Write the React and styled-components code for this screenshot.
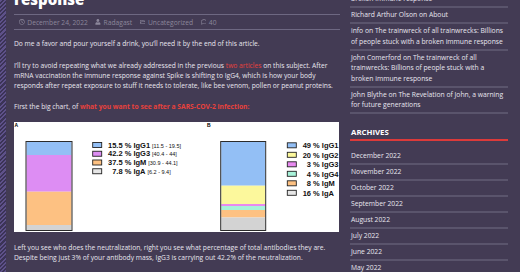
import React from 'react';
import styled, { createGlobalStyle } from 'styled-components';
import { FaRegClock, FaUser, FaRegFolderOpen, FaRegComment } from 'react-icons/fa';

const GlobalStyle = createGlobalStyle`
  html, body { margin: 0; padding: 0; }
  body {
    width: 520px;
    height: 272px;
    overflow: hidden;
    background: repeating-linear-gradient(135deg, #5e5189 0 1.5px, #3b3356 1.5px 3px);
    font-family: "Open Sans", "Liberation Sans", sans-serif;
  }
`;

const Frame = styled.div`
  margin-left: 6px;
  height: 272px;
  padding-left: 8px;
  background: #433b54;
  display: grid;
  grid-template-columns: 326px 158px;
  column-gap: 10px;
  align-items: start;
  overflow: hidden;
`;

const Main = styled.main`
  min-width: 0;
  color: #e8e6ef;
`;

const Title = styled.h1`
  margin: -7.6px 0 6.6px;
  font: 800 15px/15px "Open Sans", sans-serif;
  color: #ffffff;
`;

const Meta = styled.div`
  display: flex;
  align-items: center;
  gap: 7.5px;
  height: 14px;
  padding-left: 5px;
  margin-bottom: 9px;
  border-top: 1px solid #6e6882;
  border-bottom: 1px solid #6e6882;
  font-size: 6.7px;
  color: #8c879b;
`;

const MetaItem = styled.span`
  display: inline-flex;
  align-items: center;
  gap: 2.5px;
  svg { width: 5.8px; height: 5.8px; }
`;

const Para = styled.p`
  margin: 0 0 ${p => p.$gap ?? 11.5}px;
  font-size: 6.7px;
  line-height: 10px;
`;

const Link = styled.span`
  color: #e8413c;
  font-weight: ${p => (p.$bold ? 700 : 400)};
`;

const Figure = styled.figure`
  margin: 0 0 10.7px;
  width: 325px;
  height: 110px;
  background: #ffffff;
  svg { display: block; }
`;

const Sidebar = styled.aside`
  margin-top: -28.7px;
  font-size: 6.75px;
  color: #e8e6ef;
`;

const List = styled.ul`
  list-style: none;
  margin: 0;
  padding: 0;
`;

const CommentItem = styled.li`
  padding: 2px 0 1.5px 1px;
  line-height: 10.5px;
  border-bottom: 2px solid #5a546c;
`;

const WidgetTitle = styled.h2`
  margin: 12.7px 0 7.7px;
  padding: 0 0 2px 1px;
  font: 700 7.8px/10px "Open Sans", sans-serif;
  color: #ffffff;
  text-transform: uppercase;
  border-bottom: 2px solid #dc3a3a;
`;

const ArchiveItem = styled.li`
  padding: 2px 0 2px 1px;
  line-height: 10px;
  border-bottom: 2px solid #5a546c;
`;

const LEG_FONT = 'Liberation Sans, Arial, sans-serif';

const barA = [
  { c: '#93bff5', y0: 20, y1: 33 },
  { c: '#dd8df3', y0: 33, y1: 69.7 },
  { c: '#fdc182', y0: 69.7, y1: 103 },
  { c: '#d3d3d3', y0: 103, y1: 108 },
];
const barB = [
  { c: '#93bff5', y0: 20, y1: 63.7 },
  { c: '#fcf89c', y0: 63.7, y1: 82 },
  { c: '#e88af0', y0: 82, y1: 84 },
  { c: '#a8f3da', y0: 84, y1: 88 },
  { c: '#fdc182', y0: 88, y1: 95.5 },
  { c: '#d3d3d3', y0: 95.5, y1: 108 },
];
const legA = [
  { c: '#93bff5', n: '15.5', l: 'IgG1', r: '[11.5 - 19.5]' },
  { c: '#dd8df3', n: '42.2', l: 'IgG3', r: '[40.4 - 44]' },
  { c: '#fdc182', n: '37.5', l: 'IgM', r: '[30.9 - 44.1]' },
  { c: '#e6e6e6', n: '7.8', l: 'IgA', r: '[6.2 - 9.4]' },
];
const legB = [
  { c: '#93bff5', n: '49', l: 'IgG1' },
  { c: '#fcf89c', n: '20', l: 'IgG2' },
  { c: '#e88af0', n: '3', l: 'IgG3' },
  { c: '#a8f3da', n: '4', l: 'IgG4' },
  { c: '#fdc182', n: '8', l: 'IgM' },
  { c: '#e6e6e6', n: '16', l: 'IgA' },
];

function Bar({ x, w, segs }) {
  return (
    <g>
      {segs.map((s, i) => (
        <rect key={i} x={x} y={s.y0} width={w} height={s.y1 - s.y0} fill={s.c} />
      ))}
      <rect x={x - 0.5} y={19.5} width={w + 1} height={89} fill="none" stroke="#2b2b2b" strokeWidth="1" />
    </g>
  );
}

function Legend({ sx, numRight, y0, step, rows }) {
  return (
    <g fontFamily={LEG_FONT}>
      {rows.map((r, i) => {
        const cy = y0 + i * step;
        return (
          <g key={i}>
            <rect x={sx} y={cy - 2.5} width={9} height={5} fill={r.c} stroke="#222" strokeWidth="0.9" />
            <text x={numRight} y={cy + 2.7} fontSize="7.5" fontWeight="700" textAnchor="end" fill="#111">{r.n}</text>
            <text x={numRight + 2.1} y={cy + 2.7} fontSize="7.5" fontWeight="700" fill="#111">
              {'% ' + r.l}
              {r.r && (
                <tspan fontSize="5.5" fontWeight="400" dx="1.9">{r.r}</tspan>
              )}
            </text>
          </g>
        );
      })}
    </g>
  );
}

function Chart() {
  return (
    <svg width="325" height="110" viewBox="0 0 325 110">
      <text x="0.5" y="4.6" fontFamily={LEG_FONT} fontSize="5" fontWeight="700" fill="#000">A</text>
      <text x="193" y="4.6" fontFamily={LEG_FONT} fontSize="5" fontWeight="700" fill="#000">B</text>
      <Bar x={12.5} w={45} segs={barA} />
      <Legend sx={78.7} numRight={108.6} y0={23} step={8.75} rows={legA} />
      <Bar x={207.2} w={44} segs={barB} />
      <Legend sx={273.3} numRight={297} y0={23.3} step={9.5} rows={legB} />
    </svg>
  );
}

const comments = [
  'Gerald Fairfax on The trainwreck of all trainwrecks: Billions of people stuck with a broken immune response',
  'Richard Arthur Olson on About',
  'info on The trainwreck of all trainwrecks: Billions of people stuck with a broken immune response',
  'John Comerford on The trainwreck of all trainwrecks: Billions of people stuck with a broken immune response',
  'John Blythe on The Revelation of John, a warning for future generations',
];

const archives = [
  'December 2022', 'November 2022', 'October 2022', 'September 2022',
  'August 2022', 'July 2022', 'June 2022', 'May 2022', 'April 2022',
];

export default function App() {
  return (
    <>
      <GlobalStyle />
      <Frame>
        <Main>
          <Title>response</Title>
          <Meta>
            <MetaItem><FaRegClock />December 24, 2022</MetaItem>
            <MetaItem><FaUser />Radagast</MetaItem>
            <MetaItem><FaRegFolderOpen />Uncategorized</MetaItem>
            <MetaItem><FaRegComment />40</MetaItem>
          </Meta>
          <Para>Do me a favor and pour yourself a drink, you’ll need it by the end of this article.</Para>
          <Para>
            I’ll try to avoid repeating what we already addressed in the previous <Link>two articles</Link> on this subject. After mRNA vaccination the immune response against Spike is shifting to IgG4, which is how your body responds after repeat exposure to stuff it needs to tolerate, like bee venom, pollen or peanut proteins.
          </Para>
          <Para $gap={10}>
            First the big chart, of <Link $bold>what you want to see after a SARS-COV-2 infection:</Link>
          </Para>
          <Figure>
            <Chart />
          </Figure>
          <Para>
            Left you see who does the neutralization, right you see what percentage of total antibodies they are. Despite being just 3% of your antibody mass, IgG3 is carrying out 42.2% of the neutralization.
          </Para>
        </Main>
        <Sidebar>
          <List>
            {comments.map((c, i) => <CommentItem key={i}>{c}</CommentItem>)}
          </List>
          <WidgetTitle>Archives</WidgetTitle>
          <List>
            {archives.map(a => <ArchiveItem key={a}>{a}</ArchiveItem>)}
          </List>
        </Sidebar>
      </Frame>
    </>
  );
}
